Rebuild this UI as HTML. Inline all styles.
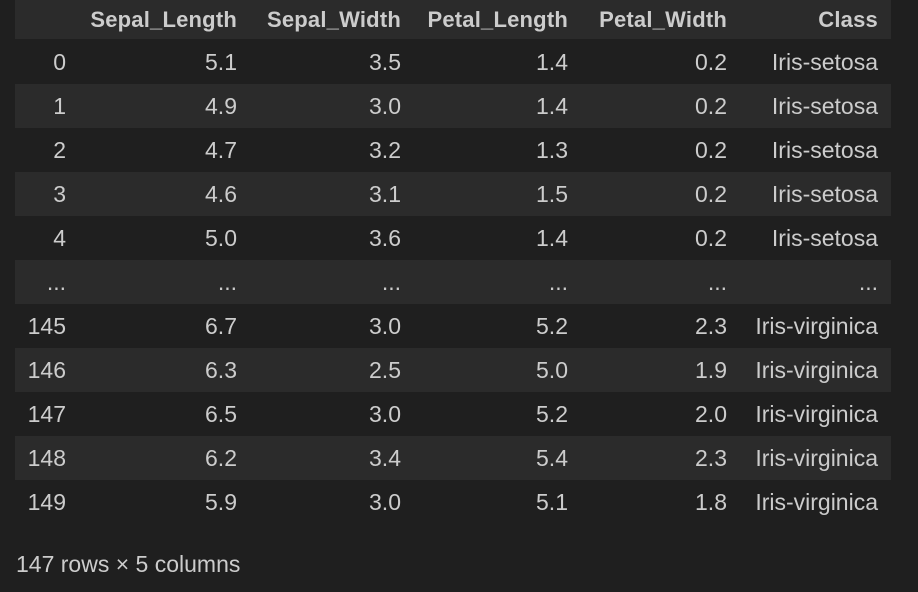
<!DOCTYPE html>
<html><head><meta charset="utf-8"><style>
body{margin:0;background:#1f1f1f;width:918px;height:592px;overflow:hidden;font-family:"Liberation Sans",sans-serif;color:#cccccc;font-size:23px;position:relative}
.r{position:absolute;left:15px;width:876px;height:44px}
.r.a{background:#2b2b2b}
.c{position:absolute;top:0;line-height:44px;text-align:right;white-space:nowrap}
.h .c{font-weight:bold;font-size:22px;letter-spacing:0.2px;line-height:39px}
.foot{position:absolute;left:16px;top:550px;line-height:28px}
</style></head><body>
<div class="r a h" style="top:0;height:39px">
<div class="c" style="right:654px">Sepal_Length</div>
<div class="c" style="right:490px">Sepal_Width</div>
<div class="c" style="right:323px">Petal_Length</div>
<div class="c" style="right:164px">Petal_Width</div>
<div class="c" style="right:13px">Class</div>
</div>
<div id="rows"></div>
<div class="foot">147 rows × 5 columns</div>
<script>
var d=[["0","5.1","3.5","1.4","0.2","Iris-setosa"],["1","4.9","3.0","1.4","0.2","Iris-setosa"],["2","4.7","3.2","1.3","0.2","Iris-setosa"],["3","4.6","3.1","1.5","0.2","Iris-setosa"],["4","5.0","3.6","1.4","0.2","Iris-setosa"],["...","...","...","...","...","..."],["145","6.7","3.0","5.2","2.3","Iris-virginica"],["146","6.3","2.5","5.0","1.9","Iris-virginica"],["147","6.5","3.0","5.2","2.0","Iris-virginica"],["148","6.2","3.4","5.4","2.3","Iris-virginica"],["149","5.9","3.0","5.1","1.8","Iris-virginica"]];
var R=[825,654,490,323,164,13],h="";
d.forEach(function(row,i){h+='<div class="r'+(i%2?' a':'')+'" style="top:'+(40+i*44)+'px">';row.forEach(function(v,j){h+='<div class="c" style="right:'+R[j]+'px">'+v+'</div>';});h+='</div>';});
document.getElementById("rows").innerHTML=h;
</script>
</body></html>
